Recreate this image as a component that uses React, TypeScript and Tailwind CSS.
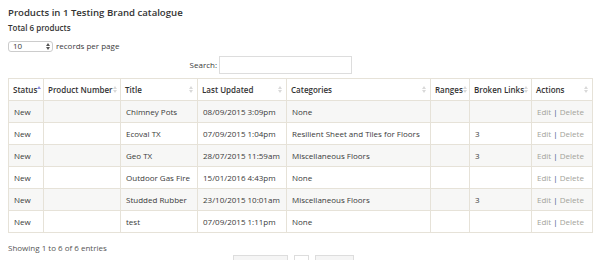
import React from "react";

interface Product {
  status: string;
  number: string;
  title: string;
  updated: string;
  category: string;
  ranges: string;
  broken: string;
}

const products: Product[] = [
  { status: "New", number: "", title: "Chimney Pots", updated: "08/09/2015 3:09pm", category: "None", ranges: "", broken: "" },
  { status: "New", number: "", title: "Ecoval TX", updated: "07/09/2015 1:04pm", category: "Resilient Sheet and Tiles for Floors", ranges: "", broken: "3" },
  { status: "New", number: "", title: "Geo TX", updated: "28/07/2015 11:59am", category: "Miscellaneous Floors", ranges: "", broken: "3" },
  { status: "New", number: "", title: "Outdoor Gas Fire", updated: "15/01/2016 4:43pm", category: "None", ranges: "", broken: "" },
  { status: "New", number: "", title: "Studded Rubber", updated: "23/10/2015 10:01am", category: "Miscellaneous Floors", ranges: "", broken: "3" },
  { status: "New", number: "", title: "test", updated: "07/09/2015 1:11pm", category: "None", ranges: "", broken: "" },
];

const columns = [
  { label: "Status", width: "w-[35px]", active: true },
  { label: "Product Number", width: "w-[77px]" },
  { label: "Title", width: "w-[77px]" },
  { label: "Last Updated", width: "w-[89px]" },
  { label: "Categories", width: "w-[144px]" },
  { label: "Ranges", width: "w-[39px]" },
  { label: "Broken Links", width: "w-[62px]" },
  { label: "Actions", width: "w-[61px]" },
];

function SortIcon({ active }: { active?: boolean }) {
  // little up/down triangles like the datatables sort glyph
  return (
    <svg width="4" height="7" viewBox="0 0 4 7" className="shrink-0">
      <path d="M2 0 L4 3 L0 3 Z" fill={active ? "#8a8ee0" : "#d9d9d9"} />
      {!active && <path d="M0 4 L4 4 L2 7 Z" fill="#d9d9d9" />}
    </svg>
  );
}

export default function App() {
  return (
    <div
      className="w-[600px] h-[260px] overflow-hidden bg-white px-2 text-[#3a3a3a] text-[8px]"
      style={{ fontFamily: '"Open Sans", "Liberation Sans", sans-serif' }}
    >
      <h2 className="pt-[6px] text-[9.6px] leading-[14px] font-semibold text-[#333]">
        Products in 1 Testing Brand catalogue
      </h2>
      <div className="mt-[2px] text-[8px] leading-[11px] font-semibold text-[#333]">Total 6 products</div>

      {/* Per Page Selector */}
      <div className="mt-[7px] flex items-center gap-[3px]">
        <div className="flex h-[11px] w-[45px] items-center justify-between rounded-[3px] border border-[#ccc] pl-[4px] pr-[2px] leading-none">
          <span>10</span>
          <svg width="4" height="7" viewBox="0 0 4 7">
            <path d="M2 0 L4 3 L0 3 Z" fill="#555" />
            <path d="M0 4 L4 4 L2 7 Z" fill="#555" />
          </svg>
        </div>
        <span>records per page</span>
      </div>

      {/* Search */}
      <div className="mt-[4px] flex items-center justify-end pr-[240px] gap-[2px]">
        <label>Search:</label>
        <div className="h-[18px] w-[133px] border border-[#ddd] bg-white" />
      </div>

      <table className="mt-[4px] w-[584px] table-fixed border-collapse">
        <colgroup>
          {columns.map((c) => (
            <col key={c.label} className={c.width} />
          ))}
        </colgroup>
        <thead>
          <tr className="h-[22px]">
            {columns.map((c) => (
              <th
                key={c.label}
                className="border border-[#e6e2d8] px-[4px] text-left font-semibold whitespace-nowrap overflow-hidden text-[#333]"
              >
                <div className="flex items-center justify-between">
                  <span>{c.label}</span>
                  <SortIcon active={c.active} />
                </div>
              </th>
            ))}
          </tr>
        </thead>
        <tbody>
          {products.map((p, i) => (
            <tr key={p.title} className={`h-[22px] ${i % 2 === 0 ? "bg-[#f7f7f6]" : "bg-white"}`}>
              <td className="border border-[#e6e2d8] px-[5px]">{p.status}</td>
              <td className="border border-[#e6e2d8] px-[5px]">{p.number}</td>
              <td className="border border-[#e6e2d8] px-[5px]">{p.title}</td>
              <td className="border border-[#e6e2d8] px-[5px] whitespace-nowrap">{p.updated}</td>
              <td className="border border-[#e6e2d8] px-[5px] whitespace-nowrap">{p.category}</td>
              <td className="border border-[#e6e2d8] px-[5px]">{p.ranges}</td>
              <td className="border border-[#e6e2d8] px-[5px]">{p.broken}</td>
              <td className="border border-[#e6e2d8] px-[5px] whitespace-nowrap text-[#a3a39a]">
                Edit <span className="text-[#2a5a8a]">|</span> Delete
              </td>
            </tr>
          ))}
        </tbody>
      </table>

      <div className="mt-[9px] text-[8px] text-[#555]">Showing 1 to 6 of 6 entries</div>

      {/* Pagination */}
      <div className="mt-[1px] flex justify-center gap-[6px] pr-[14px]">
        <span className="h-[14px] w-[55px] border border-[#ddd] bg-[#f5f5f5] text-center text-[6px] leading-[12px] text-[#ccc]">
          ← PREVIOUS
        </span>
        <span className="h-[14px] w-[15px] border border-[#ddd] bg-white text-center text-[6px] leading-[12px] text-[#428bca]">
          1
        </span>
        <span className="h-[14px] w-[39px] border border-[#ddd] bg-[#f5f5f5] text-center text-[6px] leading-[12px] text-[#ccc]">
          NEXT →
        </span>
      </div>
    </div>
  );
}
